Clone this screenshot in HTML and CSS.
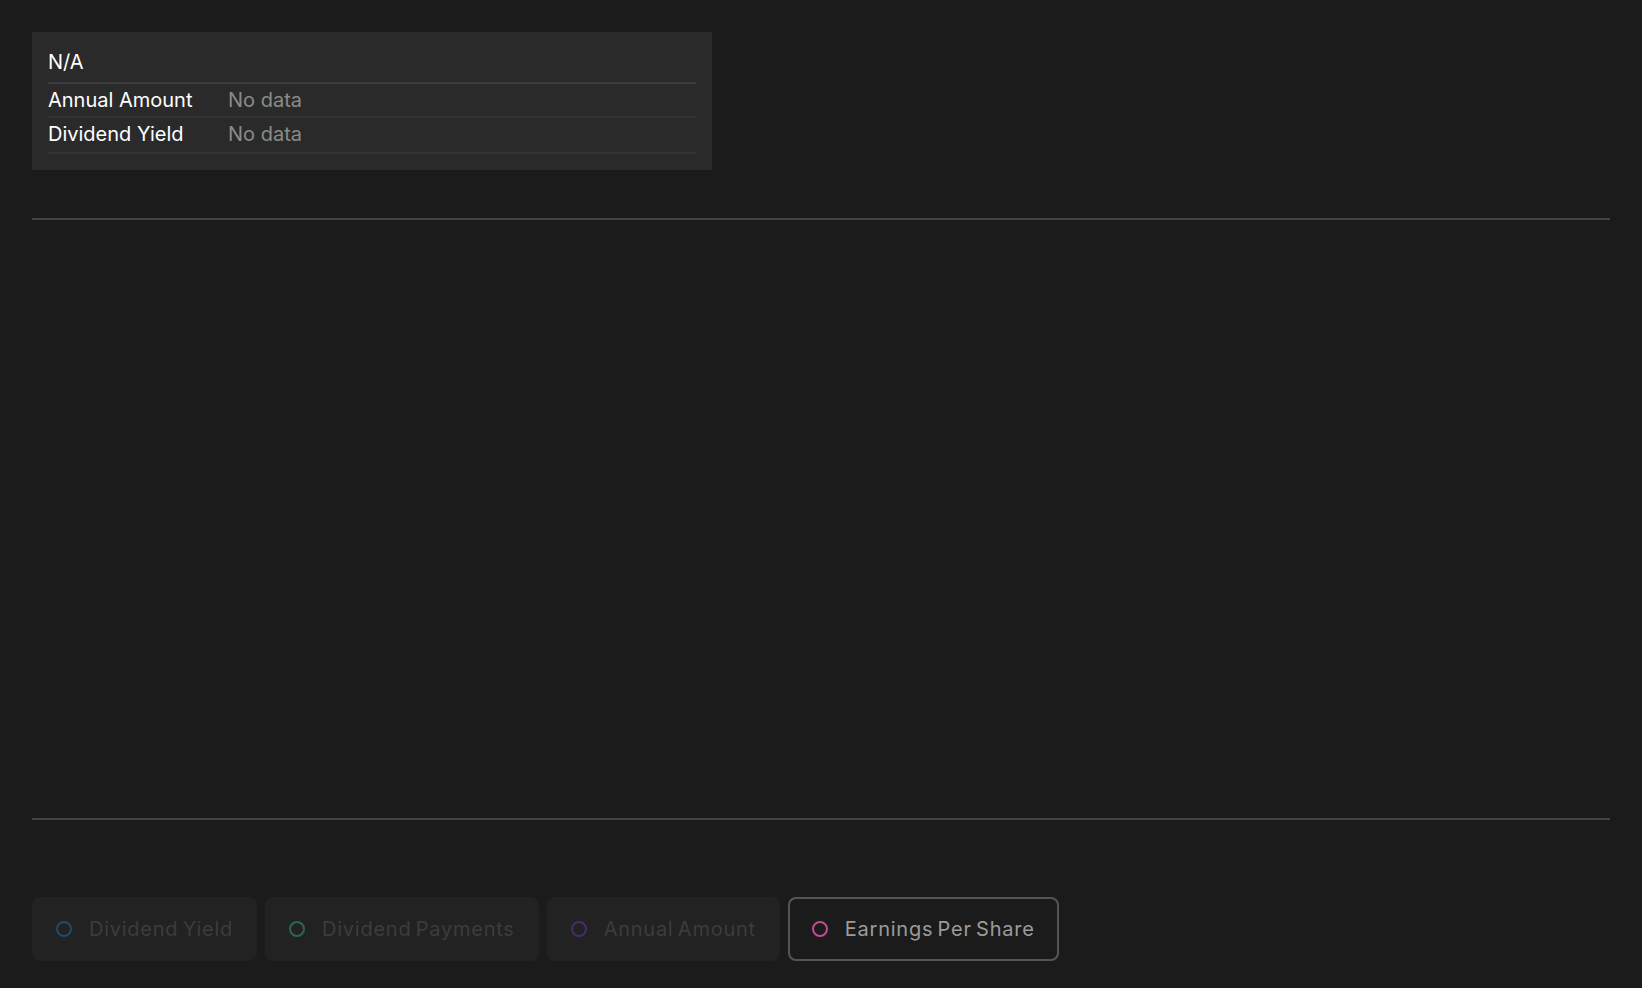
FILE: index.html
```html
<!DOCTYPE html>
<html lang="en">
<head>
  <meta charset="UTF-8" />
  <meta name="viewport" content="width=device-width, initial-scale=1.0" />
  <title>Dividends</title>
  <link rel="stylesheet" href="styles.css">
</head>
<body>
  <div class="summary">
    <div class="summary-title">N/A</div>
    <div class="summary-row">
      <span class="summary-label">Annual Amount</span>
      <span class="summary-value">No data</span>
    </div>
    <div class="summary-row">
      <span class="summary-label">Dividend Yield</span>
      <span class="summary-value">No data</span>
    </div>
  </div>

  <div class="chart"></div>

  <div class="series">
    <button class="series-btn"><span class="dot dot-blue"></span>Dividend Yield</button>
    <button class="series-btn"><span class="dot dot-green"></span>Dividend Payments</button>
    <button class="series-btn"><span class="dot dot-purple"></span>Annual Amount</button>
    <button class="series-btn active"><span class="dot dot-pink"></span>Earnings Per Share</button>
  </div>
</body>
</html>
```

FILE: styles.css
```css
body {
  margin: 0;
  padding: 32px;
  background: #1b1b1b;
  font-family: Inter, 'Noto Sans', sans-serif;
  color: #fff;
}

.summary {
  width: 648px;
  padding: 0 16px 16px;
  background: #2a2a2a;
}

.summary-title {
  height: 52px;
  display: flex;
  align-items: flex-end;
  padding-bottom: 3px;
  font-size: 20px;
  line-height: 34px;
  border-bottom: 2px solid #3c3c3c;
  box-sizing: border-box;
}

.summary-row {
  display: flex;
  height: 32px;
  align-items: center;
  font-size: 20px;
  border-bottom: 2px solid #333;
}

.summary-row + .summary-row {
  height: 34px;
}

.summary-row + .summary-row span {
  margin-top: -3px;
}

.summary-label {
  width: 180px;
}

.summary-value {
  color: #8a8a8a;
}

.chart {
  margin-top: 48px;
  height: 598px;
  border-top: 2px solid #444;
  border-bottom: 2px solid #444;
}

.series {
  display: flex;
  gap: 8px;
  margin-top: 77px;
}

.series-btn {
  display: flex;
  align-items: center;
  height: 64px;
  padding: 0 22px;
  background: #222;
  border: 2px solid #222;
  border-radius: 8px;
  font-family: Inter, 'Noto Sans', sans-serif;
  font-size: 20px;
  letter-spacing: 0.75px;
  word-spacing: -2px;
  color: #3c3c3c;
}

.series-btn.active {
  background: #1b1b1b;
  border-color: #555;
  color: #9b9b9b;
}

.dot {
  width: 12px;
  height: 12px;
  border: 2px solid;
  border-radius: 50%;
  margin-right: 17px;
}

.dot-blue { border-color: #1d4c6c; }
.dot-green { border-color: #2c6458; }
.dot-purple { border-color: #4a2b6c; }
.dot-pink { border-color: #c44b93; }
```
